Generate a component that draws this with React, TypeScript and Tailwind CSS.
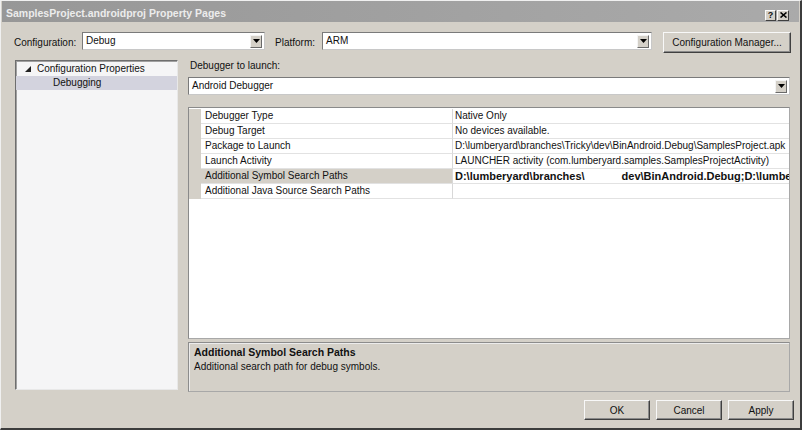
import React from "react";

const rows = [
  { name: "Debugger Type", value: "Native Only" },
  { name: "Debug Target", value: "No devices available." },
  { name: "Package to Launch", value: "D:\\lumberyard\\branches\\Tricky\\dev\\BinAndroid.Debug\\SamplesProject.apk" },
  { name: "Launch Activity", value: "LAUNCHER activity (com.lumberyard.samples.SamplesProjectActivity)" },
  { name: "Additional Symbol Search Paths", value: "", selected: true },
  { name: "Additional Java Source Search Paths", value: "" },
];

function ArrowBox() {
  return (
    <div className="w-[12px] h-[13px] my-[2px] mr-[2px] bg-[#d4d0c8] border border-t-[#f4f4f4] border-l-[#f4f4f4] border-r-[#6a6a6a] border-b-[#6a6a6a] flex items-center justify-center">
      <svg width="7" height="4" viewBox="0 0 7 4">
        <path d="M0 0 H7 L3.5 4 Z" fill="#000" />
      </svg>
    </div>
  );
}

function Select({ value, className }: { value: string; className: string }) {
  return (
    <div
      className={
        "h-[18px] bg-white border border-t-[#7a7a7a] border-l-[#7a7a7a] border-r-[#c8c8c8] border-b-[#c8c8c8] flex items-center " +
        className
      }
    >
      <span className="flex-1 pl-[3px] leading-none">{value}</span>
      <ArrowBox />
    </div>
  );
}

function Button({ label, className }: { label: string; className: string }) {
  return (
    <div
      className={
        "bg-[#d4d0c8] border border-t-[#f8f8f8] border-l-[#f8f8f8] border-r-[#404040] border-b-[#404040] flex items-center justify-center shadow-[inset_-1px_-1px_0_#8a8a8a] " +
        className
      }
    >
      {label}
    </div>
  );
}

export default function App() {
  return (
    <div className="w-[802px] h-[430px] bg-[#d4d0c8] border-t border-l border-t-[#f0f0f0] border-l-[#f0f0f0] border-r-2 border-b-2 border-r-[#3c3c3c] border-b-[#3c3c3c] flex flex-col text-[10px] text-[#111] font-['Liberation_Sans',Arial,sans-serif] overflow-hidden">
      {/* Title bar */}
      <div className="h-[21px] mx-[1px] bg-gradient-to-r from-[#979797] to-[#aaaaaa] flex items-center justify-between pl-[4px] pr-[10px] pt-[3px]">
        <span className="font-bold text-[10.5px] text-[#ececec] leading-none">SamplesProject.androidproj Property Pages</span>
        <div className="flex gap-[1px] mt-[4px]">
          <div className="w-[11px] h-[11px] bg-[#d4d0c8] border border-t-[#fafafa] border-l-[#fafafa] border-r-[#404040] border-b-[#404040] flex items-center justify-center text-[9px] font-bold leading-none">?</div>
          <div className="w-[12px] h-[11px] bg-[#d4d0c8] border border-t-[#fafafa] border-l-[#fafafa] border-r-[#404040] border-b-[#404040] flex items-center justify-center">
            <svg width="7" height="6" viewBox="0 0 7 6">
              <path d="M0.5 0.5 L6.5 5.5 M6.5 0.5 L0.5 5.5" stroke="#000" strokeWidth="1.6" />
            </svg>
          </div>
        </div>
      </div>

      {/* Body */}
      <div className="flex-1 flex flex-col pl-[13px] pr-[9px]">
        {/* Configuration row */}
        <div className="mt-[10px] h-[21px] flex items-start">
          <span className="w-[68px] mt-[6px] leading-none">Configuration:</span>
          <Select value="Debug" className="w-[183px]" />
          <span className="ml-[10px] w-[47px] mt-[6px] leading-none">Platform:</span>
          <Select value="ARM" className="w-[330px]" />
          <Button label="Configuration Manager..." className="ml-[11px] w-[128px] h-[21px]" />
        </div>

        {/* Main area */}
        <div className="mt-[7px] flex items-start">
          {/* Tree */}
          <div className="ml-[1px] w-[163px] h-[330px] bg-[#f5f5f6] border border-t-[#6e6e6e] border-l-[#6e6e6e] border-r-[#e8e8e8] border-b-[#e8e8e8] shadow-[inset_1px_1px_0_#a0a0a0]">
            <div className="h-[14px] flex items-center pl-[9px] mt-[1px]">
              <svg width="6" height="6" viewBox="0 0 6 6" className="mr-[6px]">
                <path d="M6 0 V6 H0 Z" fill="#222" />
              </svg>
              <span className="leading-none">Configuration Properties</span>
            </div>
            <div className="h-[14px] flex items-center pl-[37px] bg-[#d3d3de]">
              <span className="leading-none">Debugging</span>
            </div>
          </div>

          {/* Right column */}
          <div className="ml-[10px] w-[602px] flex flex-col">
            <div className="h-[17px] pt-[1px] leading-none pl-[2px]">Debugger to launch:</div>
            <Select value="Android Debugger" className="w-[602px]" />

            {/* Property grid */}
            <div className="mt-[12px] h-[232px] bg-white border border-t-[#8a8a8a] border-l-[#8a8a8a] border-r-[#a8a8a8] border-b-[#a8a8a8] overflow-hidden pt-[1px]">
              {rows.map((r) => (
                <div key={r.name} className="flex h-[15px]">
                  <div className="w-[12px] bg-[#d4d0c8]" />
                  <div
                    className={
                      "w-[251px] border-b border-b-[#e2e2e2] pl-[4px] flex items-center leading-none " +
                      (r.selected ? "bg-[#d4d0c8]" : "bg-white")
                    }
                  >
                    {r.name}
                  </div>
                  <div className="flex-1 border-l border-l-[#d8d8d8] border-b border-b-[#e2e2e2] pl-[2px] flex items-center leading-none whitespace-nowrap overflow-hidden">
                    {r.selected ? (
                      <span className="font-bold text-[11px]">
                        D:\lumberyard\branches\<span className="inline-block w-[37px]" />dev\BinAndroid.Debug;D:\lumbery
                      </span>
                    ) : (
                      r.value
                    )}
                  </div>
                </div>
              ))}
            </div>

            {/* Description */}
            <div className="mt-[3px] h-[50px] border border-t-[#8c8c8c] border-l-[#8c8c8c] border-r-[#a8a8a8] border-b-[#a8a8a8] shadow-[inset_1px_1px_0_#ececec] pl-[5px] pt-[4px] flex flex-col gap-[4px]">
              <span className="font-bold leading-none text-[10.5px]">Additional Symbol Search Paths</span>
              <span className="leading-none">Additional search path for debug symbols.</span>
            </div>
          </div>
        </div>

        {/* Buttons */}
        <div className="mt-[8px] flex justify-end gap-[6px] -mr-[3px]">
          <Button label="OK" className="w-[66px] h-[20px]" />
          <Button label="Cancel" className="w-[66px] h-[20px]" />
          <Button label="Apply" className="w-[66px] h-[20px]" />
        </div>
      </div>
    </div>
  );
}
